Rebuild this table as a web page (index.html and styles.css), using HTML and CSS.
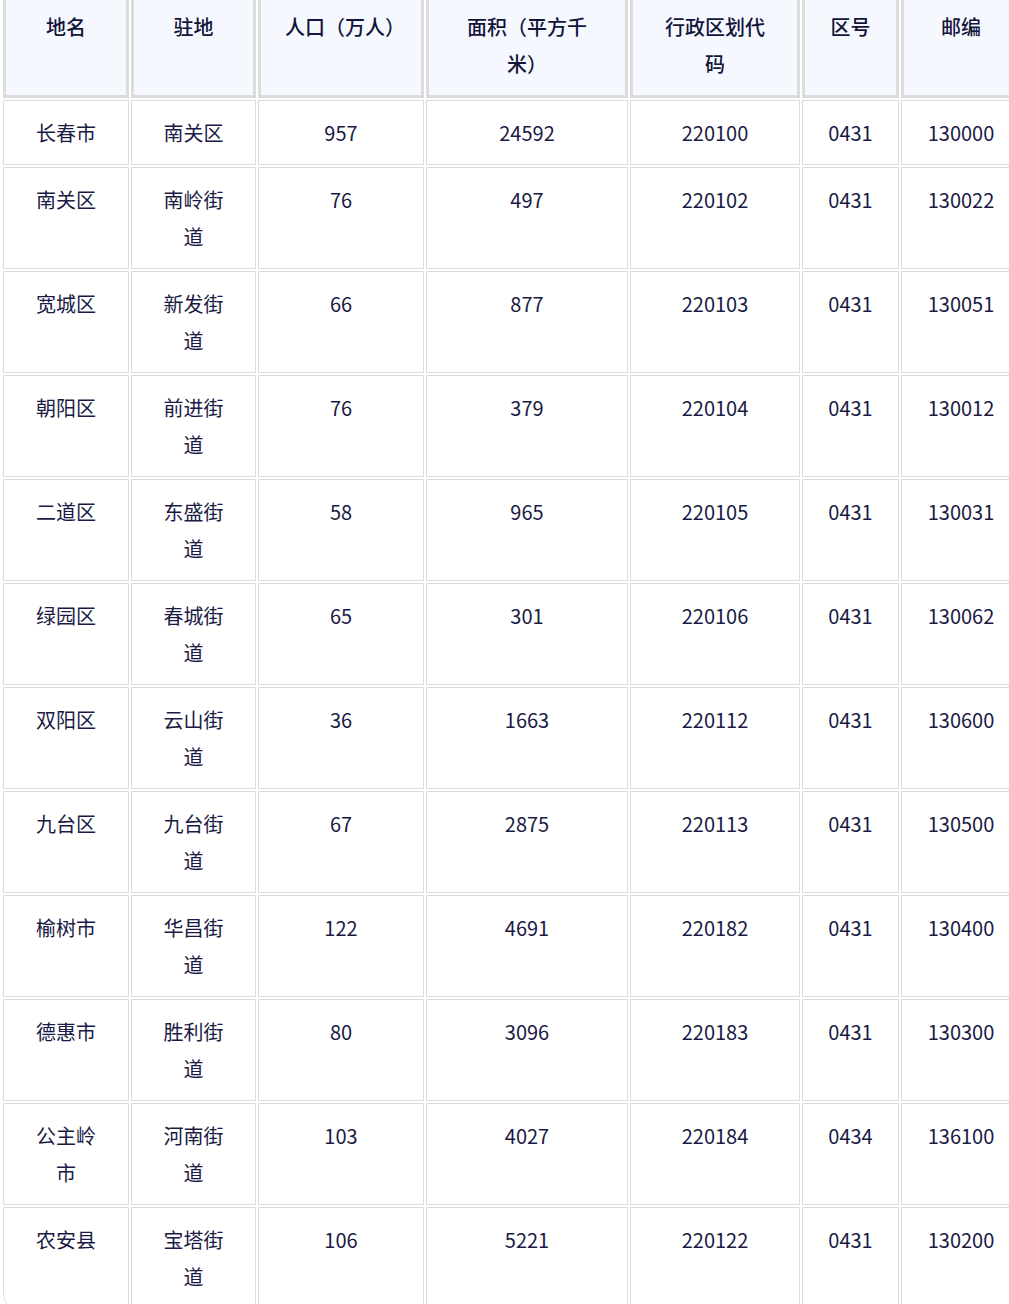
FILE: index.html
```html
<!DOCTYPE html>
<html lang="zh-CN">
<head>
<meta charset="utf-8">
<title>长春市行政区划</title>
<link rel="stylesheet" href="styles.css">
</head>
<body>
<div class="table-wrap">
<table class="data-table">
<thead>
<tr>
<th class="c1">地名</th>
<th class="c2">驻地</th>
<th class="c3">人口（万人）</th>
<th class="c4">面积（平方千米）</th>
<th class="c5">行政区划代码</th>
<th class="c6">区号</th>
<th class="c7">邮编</th>
</tr>
</thead>
<tbody>
<tr><td>长春市</td><td>南关区</td><td>957</td><td>24592</td><td>220100</td><td>0431</td><td>130000</td></tr>
<tr><td>南关区</td><td>南岭街道</td><td>76</td><td>497</td><td>220102</td><td>0431</td><td>130022</td></tr>
<tr><td>宽城区</td><td>新发街道</td><td>66</td><td>877</td><td>220103</td><td>0431</td><td>130051</td></tr>
<tr><td>朝阳区</td><td>前进街道</td><td>76</td><td>379</td><td>220104</td><td>0431</td><td>130012</td></tr>
<tr><td>二道区</td><td>东盛街道</td><td>58</td><td>965</td><td>220105</td><td>0431</td><td>130031</td></tr>
<tr><td>绿园区</td><td>春城街道</td><td>65</td><td>301</td><td>220106</td><td>0431</td><td>130062</td></tr>
<tr><td>双阳区</td><td>云山街道</td><td>36</td><td>1663</td><td>220112</td><td>0431</td><td>130600</td></tr>
<tr><td>九台区</td><td>九台街道</td><td>67</td><td>2875</td><td>220113</td><td>0431</td><td>130500</td></tr>
<tr><td>榆树市</td><td>华昌街道</td><td>122</td><td>4691</td><td>220182</td><td>0431</td><td>130400</td></tr>
<tr><td>德惠市</td><td>胜利街道</td><td>80</td><td>3096</td><td>220183</td><td>0431</td><td>130300</td></tr>
<tr><td>公主岭市</td><td>河南街道</td><td>103</td><td>4027</td><td>220184</td><td>0434</td><td>136100</td></tr>
<tr><td>农安县</td><td>宝塔街道</td><td>106</td><td>5221</td><td>220122</td><td>0431</td><td>130200</td></tr>
</tbody>
</table>
</div>
</body>
</html>
```
FILE: styles.css
```css
html, body {
  margin: 0;
  padding: 0;
  background: #ffffff;
  overflow: hidden;
}

body {
  font-family: "Noto Sans CJK SC", "Noto Sans", sans-serif;
  color: #1a1a44;
}

.table-wrap {
  margin-top: -10px;
  padding-left: 1px;
  width: 1100px;
}

.data-table {
  table-layout: fixed;
  border-collapse: separate;
  border-spacing: 2px;
  width: 1022px;
  font-size: 20px;
  line-height: 37px;
}

.data-table th,
.data-table td {
  box-sizing: border-box;
  text-align: center;
  vertical-align: top;
}

.data-table th {
  background: #f5f9ff;
  border: 3px solid #dcdcdc;
  padding: 13px 24px;
  font-weight: 500;
  color: #14143a;
}

.data-table td {
  background: #ffffff;
  border: 1px solid #dcdcdc;
  padding: 13px 24px;
  font-weight: 400;
}

.data-table tbody tr:last-child td:first-child {
  border-bottom-left-radius: 14px;
}

.c1 { width: 126px; }
.c2 { width: 125px; }
.c3 { width: 166px; }
.c4 { width: 202px; }
.c5 { width: 170px; }
.c6 { width: 97px; }
.c7 { width: 120px; }
```
